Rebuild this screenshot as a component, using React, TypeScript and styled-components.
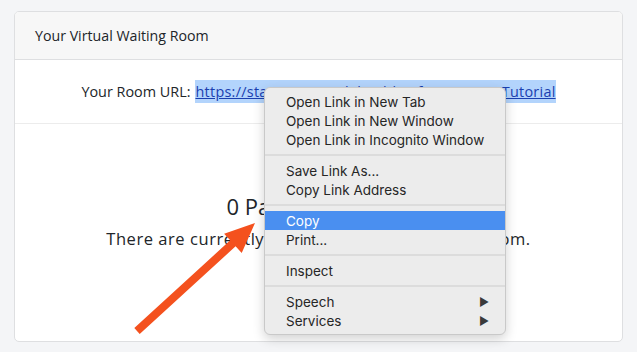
import styled, { createGlobalStyle } from 'styled-components';

const GlobalStyle = createGlobalStyle`
  html, body {
    margin: 0;
    padding: 0;
    background: #f4f5f7;
  }
  body {
    font-family: 'Open Sans', 'Noto Sans', sans-serif;
    color: #212529;
  }
`;

const Page = styled.div`
  position: relative;
  width: 637px;
  height: 352px;
  padding: 11px 14px 12px;
  box-sizing: border-box;
  overflow: hidden;
`;

const Card = styled.div`
  height: 100%;
  display: flex;
  flex-direction: column;
  background: #fff;
  border: 1px solid #dedfe1;
  border-radius: 5px;
  overflow: hidden;
`;

const CardHeader = styled.div`
  height: 47px;
  display: flex;
  align-items: center;
  padding: 0 20px;
  background: #f7f7f7;
  border-bottom: 1px solid #dedfe1;
  font-size: 14.2px;
  color: #212529;
`;

const UrlRow = styled.div`
  height: 63px;
  display: flex;
  align-items: center;
  justify-content: center;
  border-bottom: 1px solid #ececec;
  font-size: 14.4px;
  white-space: nowrap;
`;

const UrlLink = styled.a`
  margin-left: 5px;
  padding: 2px 0;
  color: #1a3fb0;
  text-decoration: underline;
  letter-spacing: 0.28px;
  background: #b3d4fc;
`;

const Status = styled.div`
  flex: 1;
  display: flex;
  flex-direction: column;
  align-items: center;
  padding-top: 68px;
`;

const Count = styled.div`
  font-size: 22px;
  line-height: 28px;
  color: #212529;
`;

const Description = styled.div`
  margin-top: 7px;
  font-size: 16.5px;
  letter-spacing: 0.55px;
  color: #212529;
`;

const Menu = styled.div`
  position: absolute;
  left: 264px;
  top: 87px;
  width: 240px;
  padding: 4px 0;
  background: #ececec;
  border: 1px solid #c9c9c9;
  border-radius: 6px;
  box-shadow: 0 4px 12px rgba(0, 0, 0, 0.18);
  font-family: 'Inter', 'Liberation Sans', sans-serif;
  font-size: 13.5px;
  color: #262626;
  white-space: nowrap;
`;

const Item = styled.div<{ $active?: boolean }>`
  height: 19px;
  display: flex;
  align-items: center;
  justify-content: space-between;
  padding: 0 16px 0 21px;
  background: ${p => (p.$active ? '#4a8ff0' : 'transparent')};
  color: ${p => (p.$active ? '#fff' : '#262626')};
`;

const Arrow = styled.span`
  font-size: 11px;
  color: #3a3a3a;
`;

const Separator = styled.div`
  height: 12px;
  display: flex;
  align-items: center;
  &::after {
    content: '';
    flex: 1;
    height: 2px;
    background: #dcdcdc;
  }
`;

const Pointer = styled.svg`
  position: absolute;
  left: 0;
  top: 0;
  pointer-events: none;
`;

const menuGroups: { label: string; active?: boolean; sub?: boolean }[][] = [
  [
    { label: 'Open Link in New Tab' },
    { label: 'Open Link in New Window' },
    { label: 'Open Link in Incognito Window' },
  ],
  [{ label: 'Save Link As...' }, { label: 'Copy Link Address' }],
  [{ label: 'Copy', active: true }, { label: 'Print...' }],
  [{ label: 'Inspect' }],
  [
    { label: 'Speech', sub: true },
    { label: 'Services', sub: true },
  ],
];

export default function App() {
  return (
    <>
      <GlobalStyle />
      <Page>
        <Card>
          <CardHeader>Your Virtual Waiting Room</CardHeader>
          <UrlRow>
            Your Room URL:
            <UrlLink href="#">https://staging-121.telehealthsoftware.com/Tutorial</UrlLink>
          </UrlRow>
          <Status>
            <Count>0 Patients Waiting</Count>
            <Description>There are currently 0 patients in your waiting room.</Description>
          </Status>
        </Card>

        <Menu>
          {menuGroups.map((group, gi) => (
            <div key={gi}>
              {gi > 0 && <Separator />}
              {group.map(item => (
                <Item key={item.label} $active={item.active}>
                  <span>{item.label}</span>
                  {item.sub && <Arrow>▶</Arrow>}
                </Item>
              ))}
            </div>
          ))}
        </Menu>

        <Pointer width="637" height="352" viewBox="0 0 637 352">
          <polygon
            fill="#f4511e"
            points="134.3,328 230.2,240.3 224.1,233.7 255,223 241.7,252.9 235.6,246.3 139.7,334"
          />
        </Pointer>
      </Page>
    </>
  );
}
